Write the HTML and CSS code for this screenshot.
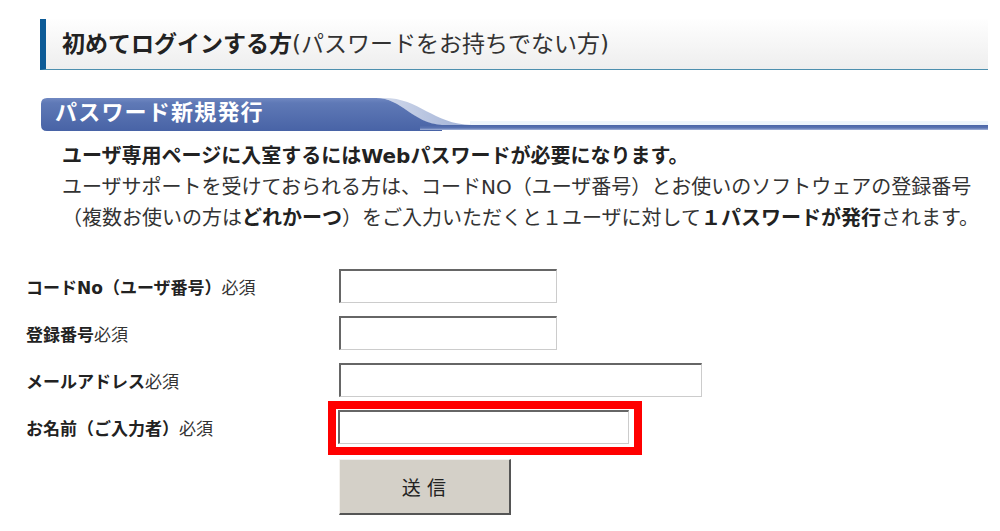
FILE: index.html
```html
<!DOCTYPE html>
<html lang="ja">
<head>
    <meta charset="UTF-8">
    <title>パスワード新規発行</title>
    <link rel="stylesheet" href="styles.css">
</head>
<body>
    <h1 class="page-title"><strong>初めてログインする方</strong>(パスワードをお持ちでない方)</h1>

    <div class="banner">
        <svg class="banner-bg" width="948" height="36" viewBox="0 0 948 36">
            <defs>
                <linearGradient id="dark" x1="0" y1="0" x2="0" y2="1">
                    <stop offset="0" stop-color="#7088c2"/>
                    <stop offset="0.15" stop-color="#5f79b6"/>
                    <stop offset="1" stop-color="#4863a6"/>
                </linearGradient>
                <linearGradient id="band" x1="0" y1="0" x2="1" y2="0">
                    <stop offset="0" stop-color="#d5dcec"/>
                    <stop offset="1" stop-color="#9fb0d6"/>
                </linearGradient>
                <linearGradient id="stripe" x1="0" y1="0" x2="0" y2="1">
                    <stop offset="0" stop-color="#4b65a6"/>
                    <stop offset="0.6" stop-color="#5a74b2"/>
                    <stop offset="1" stop-color="#a7b6da"/>
                </linearGradient>
            </defs>
            <rect x="430" y="25" width="518" height="4" fill="#eef5fb"/>
            <path d="M336 2 H344 C380 2 392 28 432 29 H400 C372 27 362 2 336 2 Z" fill="url(#band)"/>
            <path d="M7 2 H336 C362 2 372 27 402 29 V35 H7 Q1 35 1 29 V8 Q1 2 7 2 Z" fill="url(#dark)"/>
            <rect x="380" y="29" width="568" height="5" fill="url(#stripe)"/>
        </svg>
        <h2 class="banner-title">パスワード新規発行</h2>
    </div>

    <div class="intro">
        <p class="lead">ユーザ専用ページに入室するにはWebパスワードが必要になります。</p>
        <p>ユーザサポートを受けておられる方は、コードNO（ユーザ番号）とお使いのソフトウェアの登録番号<br>（複数お使いの方は<strong>どれかーつ</strong>）をご入力いただくと１ユーザに対して<strong>１パスワードが発行</strong>されます。</p>
    </div>

    <form class="form">
        <div class="form-row">
            <label for="code"><strong>コードNo（ユーザ番号）</strong>必須</label>
            <input type="text" id="code" class="field field-short">
        </div>
        <div class="form-row">
            <label for="serial"><strong>登録番号</strong>必須</label>
            <input type="text" id="serial" class="field field-short">
        </div>
        <div class="form-row">
            <label for="mail"><strong>メールアドレス</strong>必須</label>
            <input type="text" id="mail" class="field field-long">
        </div>
        <div class="form-row">
            <label for="name"><strong>お名前（ご入力者）</strong>必須</label>
            <span class="highlight"><input type="text" id="name" class="field field-mid"></span>
        </div>
        <div class="form-row">
            <span></span>
            <button type="submit" class="submit">送 信</button>
        </div>
    </form>
</body>
</html>
```

FILE: styles.css
```css
body {
    margin: 0;
    background: #fff;
    color: #333;
    font-family: "DejaVu Sans", "Noto Sans CJK JP", sans-serif;
}

strong {
    color: #222;
}

.page-title {
    margin: 19px 12px 0 40px;
    height: 50px;
    padding-left: 16px;
    border-left: 6px solid #0d5b97;
    border-bottom: 1px solid #4d8fae;
    background: linear-gradient(#fefefe, #eeeeee);
    font-size: 23px;
    font-weight: normal;
    line-height: 50px;
}

.banner {
    position: relative;
    margin: 26px 12px 0 40px;
    height: 36px;
}

.banner-bg {
    position: absolute;
    left: 0;
    top: 0;
}

.banner-title {
    position: relative;
    margin: 0;
    padding-left: 15px;
    color: #fff;
    font-size: 22px;
    line-height: 34px;
    letter-spacing: 1.2px;
}

.intro {
    margin-top: 9px;
    padding-left: 62px;
    font-size: 20px;
    line-height: 31px;
}

.intro p {
    margin: 0;
}

.lead {
    font-weight: bold;
    color: #222;
}

.form {
    margin-top: 35px;
    padding-left: 26px;
}

.form-row {
    display: grid;
    grid-template-columns: 313px auto;
    align-items: center;
    margin-bottom: 13px;
}

.form-row label {
    font-size: 17px;
    color: #333;
}

.field {
    box-sizing: border-box;
    height: 34px;
    margin: 0;
    padding: 2px 4px;
    border-top: 2px solid #666;
    border-left: 2px solid #666;
    border-right: 1px solid #ccc;
    border-bottom: 1px solid #ccc;
    background: #fff;
    font-size: 16px;
}

.field-short {
    width: 218px;
}

.field-mid {
    width: 291px;
}

.field-long {
    width: 363px;
}

.form-row > .field, .highlight {
    justify-self: start;
}

.highlight {
    display: inline-block;
    margin: -9px 0 -11px -11px;
    padding: 1px 5px 3px 2px;
    border: 8px solid #f00;
    line-height: 0;
}

.submit {
    justify-self: start;
    width: 172px;
    height: 56px;
    margin-top: 2px;
    background: #d4d0c8;
    border-top: 1px solid #f4f2ee;
    border-left: 1px solid #f4f2ee;
    border-right: 2px solid #555;
    border-bottom: 2px solid #555;
    color: #222;
    font-family: "Noto Sans CJK JP", sans-serif;
    font-size: 19px;
    letter-spacing: 1px;
    cursor: pointer;
}
```
